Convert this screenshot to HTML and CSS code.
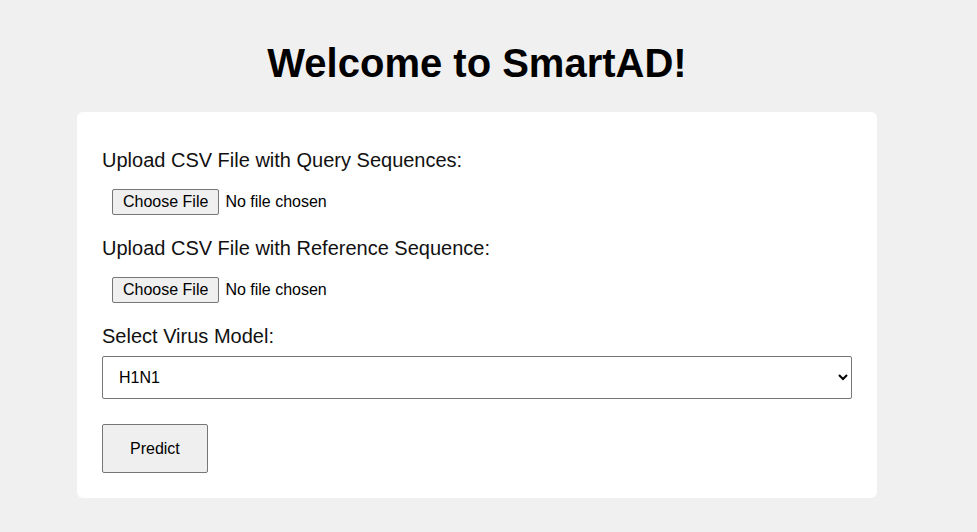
FILE: index.html
```html
<!DOCTYPE html>
<html lang="en">
<head>
<meta charset="utf-8">
<title>SmartAD</title>
<link rel="stylesheet" href="styles.css">
</head>
<body>
<div class="page">
  <h1 class="title">Welcome to SmartAD!</h1>
  <form class="card">
    <label class="label" for="query">Upload CSV File with Query Sequences:</label>
    <input class="file" type="file" id="query" accept=".csv">
    <label class="label" for="reference">Upload CSV File with Reference Sequence:</label>
    <input class="file" type="file" id="reference" accept=".csv">
    <label class="label" for="model">Select Virus Model:</label>
    <select class="select" id="model">
      <option>H1N1</option>
      <option>H3N2</option>
    </select>
    <button class="predict" type="button">Predict</button>
  </form>
</div>
</body>
</html>
```
FILE: styles.css
```css
html, body {
  margin: 0;
  padding: 0;
  background: #f0f0f0;
  font-family: "Liberation Sans", Arial, sans-serif;
  color: #000;
}

.page {
  width: 954px;
  padding-top: 40px;
}

.title {
  margin: 0 0 26px;
  text-align: center;
  font-size: 40px;
  font-weight: bold;
  line-height: 46px;
}

.card {
  width: 800px;
  box-sizing: border-box;
  margin: 0 auto;
  background: #fff;
  border-radius: 6px;
  padding: 25px;
  display: flex;
  flex-direction: column;
  align-items: flex-start;
}

.label {
  display: block;
  font-size: 20px;
  line-height: 23px;
  margin: 12px 0 7px;
  color: #111;
}

.file {
  font-family: "Liberation Sans", Arial, sans-serif;
  font-size: 16px;
  padding: 10px;
  line-height: 18px;
}

.file::file-selector-button {
  font-family: "Liberation Sans", Arial, sans-serif;
  font-size: 16px;
  background: #efefef;
  border: 1px solid #767676;
  border-radius: 2px;
  padding: 3px 10px;
  margin-right: 6px;
  color: #000;
}

.select {
  width: 100%;
  height: 43px;
  box-sizing: border-box;
  font-family: "Liberation Sans", Arial, sans-serif;
  font-size: 16px;
  padding: 0 12px;
  border: 1px solid #767676;
  border-radius: 2px;
  background: #fff;
  color: #000;
  margin: 1px 0 25px;
}

.predict {
  font-family: "Liberation Sans", Arial, sans-serif;
  font-size: 16px;
  line-height: 19px;
  padding: 14px 27px;
  background: #efefef;
  border: 1px solid #767676;
  border-radius: 2px;
  color: #000;
}
```
